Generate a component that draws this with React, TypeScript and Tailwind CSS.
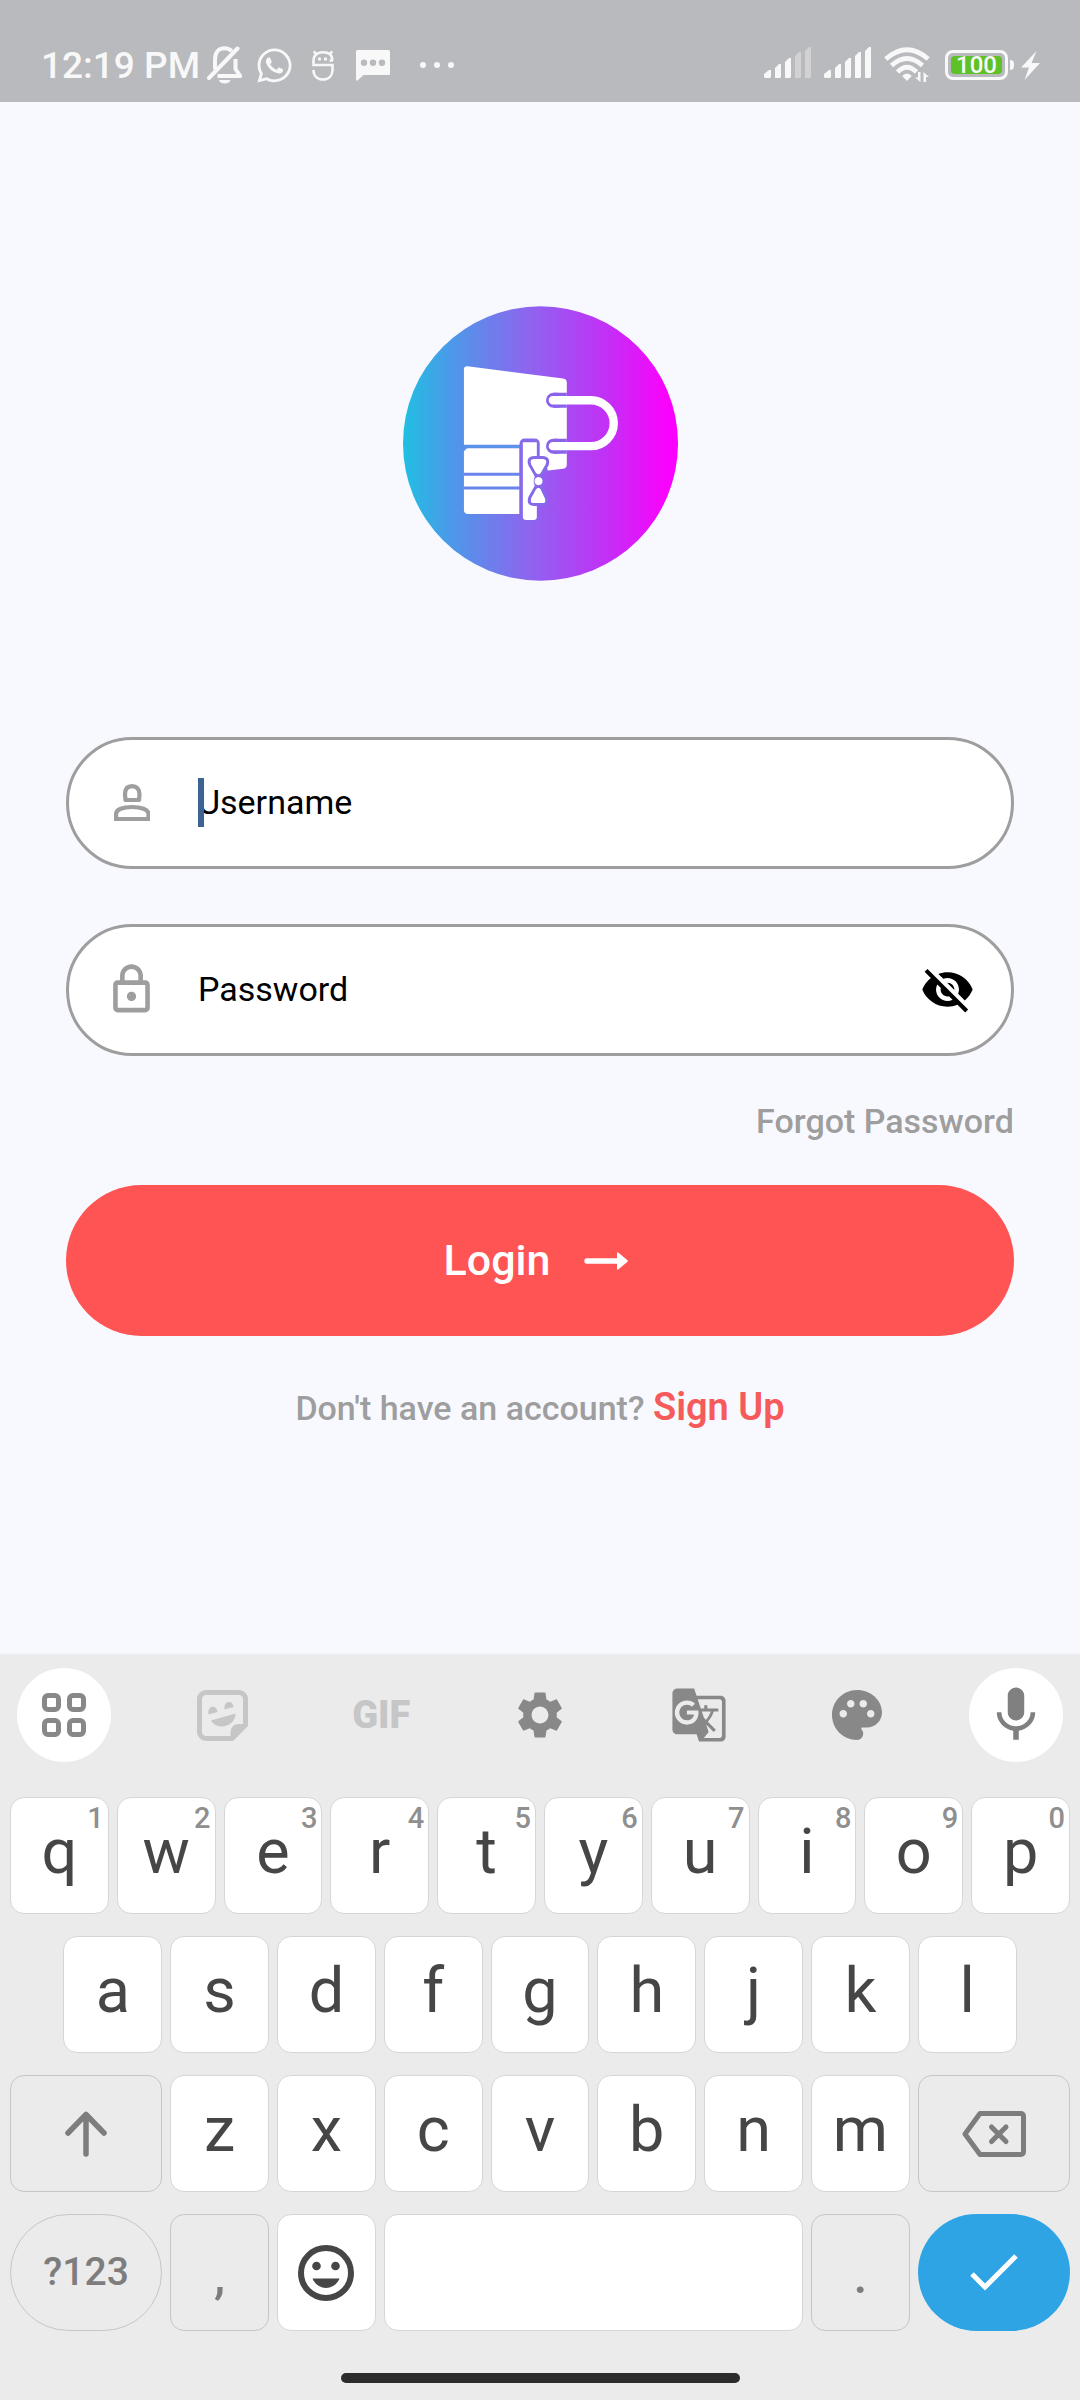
import { useState } from "react";
import type { ReactNode } from "react";
import { MdGTranslate, MdMic, MdOutlineLock, MdPalette, MdSettings, MdVisibilityOff } from "react-icons/md";
import { FaWhatsapp } from "react-icons/fa";

function BellOffIcon() {
  return (
    <svg viewBox="0 0 36 38" className="h-[38px] w-9" fill="none" stroke="currentColor" strokeWidth="4">
      <path d="M8 23.500V13.500C8 5.500 12.500 2.200 17.500 2.200c3 0 5.500 1 7.200 3" />
      <path d="M2 32 30.500 2.500" strokeLinecap="round" />
      <path d="M28.500 13v10l4.700 7H10.500" strokeLinejoin="round" />
      <path d="M12 34h11.500a5.800 4 0 0 1-11.500 0z" fill="currentColor" stroke="none" />
    </svg>
  );
}

function RobotIcon() {
  return (
    <svg viewBox="0 0 22 31" className="h-[31px] w-[22px]" fill="none" stroke="currentColor" strokeWidth="2.600">
      <path d="M21 10.500H17.500M20.500 10.500C20.500 5 17 2.200 11 2.200S1.500 5.500 1.500 11v4H20.500v5c0 5.500-3.500 9.500-9.500 9.500S1.500 25.500 1.500 20" />
      <path d="M4 4 1.800 1.300M18 4l2.200-2.700" />
      <circle cx="7.500" cy="9" r="1.700" fill="currentColor" stroke="none" />
      <circle cx="13.500" cy="9" r="1.700" fill="currentColor" stroke="none" />
    </svg>
  );
}

function MessageIcon() {
  return (
    <svg viewBox="0 0 34 31" className="h-[31px] w-[34px]" fill="currentColor">
      <path
        fillRule="evenodd"
        d="M1.500 0h31A1.500 1.500 0 0 1 34 1.500v22a1.500 1.500 0 0 1-1.500 1.500H7.500L1.500 30.500Q0 31 0 29.500v-28A1.500 1.500 0 0 1 1.500 0zM8 9.500a3.200 3.200 0 1 0 0 6.400a3.200 3.200 0 1 0 0-6.400zm9 0a3.200 3.200 0 1 0 0 6.400a3.200 3.200 0 1 0 0-6.400zm9 0a3.200 3.200 0 1 0 0 6.400a3.200 3.200 0 1 0 0-6.400z"
      />
    </svg>
  );
}

function SignalIcon({ strength }: { strength: number }) {
  const heights = [8, 14, 20, 26, 31];
  return (
    <svg viewBox="0 0 48 31" className="h-[31px] w-12" fill="currentColor">
      {heights.map((h, i) => (
        <path
          key={h}
          opacity={i < strength ? 1 : 0.4}
          d={`M${i * 10 + (i === 0 ? 0 : 1)} ${31 - h + 4}L${i * 10 + 5} ${31 - h}H${i * 10 + 7}V30L${i * 10 + 6} 31H${i * 10 + 1}L${i * 10 + (i === 0 ? 0 : 1)} 30z`}
        />
      ))}
    </svg>
  );
}

function WifiIcon() {
  return (
    <svg viewBox="0 0 46 36" className="h-9 w-[46px]" fill="none" stroke="currentColor" strokeWidth="4.800">
      <path d="M1.800 12Q23-6.500 44.200 12" />
      <path d="M7.500 18.500Q23 4.500 38.500 18.500" />
      <path d="M13.500 25Q23 15.500 32.500 25" />
      <path d="M23 26.500q3 0 4.800 2.500L23 34l-4.800-5Q20 26.500 23 26.500z" fill="currentColor" stroke="none" />
      <path d="M36.500 25v10L31 30.500h3V25zM39.500 35V25L45 30h-3v5z" fill="currentColor" stroke="none" />
    </svg>
  );
}

function StatusBar() {
  return (
    <header className="flex h-[102px] items-end justify-between bg-[#b9babe] pr-10 pb-[17px] pl-[41px] text-[#f8f8f8]">
      <div className="flex h-10 items-center">
        <span className="pt-0.5 text-[37px] leading-10 font-medium">12:19 PM</span>
        <div className="ml-[7px] flex items-center gap-3">
          <BellOffIcon />
          <FaWhatsapp className="size-[39px]" />
        </div>
        <div className="ml-[18px] flex items-center gap-[22px]">
          <RobotIcon />
          <MessageIcon />
        </div>
        <div className="ml-[30px] flex gap-2">
          <span className="size-1.5 rounded-full bg-current" />
          <span className="size-1.5 rounded-full bg-current" />
          <span className="size-1.5 rounded-full bg-current" />
        </div>
      </div>
      <div className="flex h-10 items-center">
        <div className="flex gap-3">
          <SignalIcon strength={3} />
          <SignalIcon strength={5} />
          <WifiIcon />
        </div>
        <div className="ml-[15px] flex h-[30px] w-[63px] items-center justify-center rounded-lg border-3 border-current p-[3px]">
          <span className="flex h-full w-full items-center justify-center rounded-sm bg-[#5ec127] text-[24px] leading-[18px] font-medium">
            100
          </span>
        </div>
        <span className="ml-0.5 h-2.5 w-1 rounded-r-sm bg-current" />
        <svg viewBox="0 0 19 29" className="ml-[7px] h-[29px] w-[19px]" fill="currentColor">
          <path d="M15.500 0 0 16.500h8L3.500 29 19 12h-8.500z" />
        </svg>
      </div>
    </header>
  );
}

function Logo() {
  return (
    <svg viewBox="36 48 826 824" className="size-[275px]" role="img" aria-label="Logo">
      <defs>
        <linearGradient id="logo-gradient" x1="0" x2="1" y1="0" y2="0">
          <stop offset="0" stopColor="#20bfe2" />
          <stop offset="0.180" stopColor="#4d98e9" />
          <stop offset="0.450" stopColor="#8c66ef" />
          <stop offset="0.750" stopColor="#c42ef6" />
          <stop offset="0.950" stopColor="#f804fc" />
          <stop offset="1" stopColor="#fb00ff" />
        </linearGradient>
      </defs>
      <ellipse cx="449" cy="460" rx="413" ry="412" fill="url(#logo-gradient)" />
      <path d="M230 228 517 265Q528 267 528 277V523Q528 534 517 536L440 545V464H219V238Q219 227 230 228z" fill="#fff" />
      <path d="M232 474H386V672H232Q219 672 219 659V487Q219 474 232 474z" fill="#fff" />
      <g fill="none" stroke="#866ae9" strokeWidth="9">
        <path d="M219 481Q219 469 231 469H388" stroke="#5b93e9" />
        <path d="M219 552.500H388M219 593.500H388" stroke="#6b83ec" />
      </g>
      <path d="M386 692V462Q386 445 403 445H430Q447 445 447 462V500H460L472 545H440V692z" fill="#866ae9" />
      <path d="M396 456H438V680Q438 690 428 690H406Q396 690 396 680z" fill="#fff" />
      <path d="M447 464H470V500H447z" fill="#fff" />
      <g fill="none" stroke="#8b62ec" strokeWidth="45">
        <path d="M488 330H500M488 468H500" strokeLinecap="round" />
        <path d="M488 330H528M488 468H528" />
      </g>
      <path d="M486 330H600A69 69 0 0 1 600 468H486" fill="none" stroke="#fff" strokeWidth="25" strokeLinecap="round" />
      <path d="M437 559 417 524Q409 503 430 502H455Q476 503 469 524L448 559Q456 573 448 587L465 622Q472 643 455 643H430Q410 643 417 622L437 587Q429 573 437 559z" fill="#fff" stroke="#866ae9" strokeWidth="9" />
      <g fill="#fff">
        <path d="M438 552 422 524Q417 508 431 508H454Q468 508 462 524L447 552z" />
        <circle cx="443" cy="573" r="12" />
        <path d="M438 594H447L462 625Q467 639 454 639H431Q417 639 422 625z" />
      </g>
      <path d="M432 552Q443 561 454 552M432 594Q443 585 454 594" fill="none" stroke="#866ae9" strokeWidth="8" />
    </svg>
  );
}

function PersonIcon() {
  return (
    <svg viewBox="0 0 36 37" className="h-[37px] w-9" fill="none" stroke="currentColor" strokeWidth="4.200">
      <path d="M11.500 16 11 10.500C11 5 13.500 2.200 18 2.200S25.500 5 25.500 10.500L25 16z" strokeLinejoin="round" />
      <path d="M2.100 35V30C2.100 25.500 9 23 18 23s16.500 2.500 16.500 7v5z" />
    </svg>
  );
}

function Field({
  id,
  label,
  type,
  icon,
  caret,
  action,
}: {
  id: string;
  label: string;
  type: string;
  icon: ReactNode;
  caret?: boolean;
  action?: ReactNode;
}) {
  return (
    <div className="flex h-[132px] items-center rounded-full border-3 border-[#9e9e9e] bg-white pr-9 pb-0.5 pl-[35px] text-[#9e9e9e]">
      <label htmlFor={id} aria-label={label} className="flex w-[55px] justify-center">
        {icon}
      </label>
      <div className="relative ml-[39px] flex flex-1">
        <input
          id={id}
          type={type}
          placeholder={label}
          className="h-[72px] w-full min-w-0 bg-transparent text-[34px] text-black outline-none placeholder:text-black placeholder:opacity-100"
        />
        {caret && <span className="absolute top-3 left-0 h-[49px] w-1.5 bg-[#3d6491]" />}
      </div>
      {action}
    </div>
  );
}

function LoginForm() {
  const [visible, setVisible] = useState(false);
  return (
    <form className="mt-[156px] w-full px-[66px]" onSubmit={(e) => e.preventDefault()}>
      <div className="flex flex-col gap-[55px]">
        <Field id="username" label="Username" type="text" icon={<PersonIcon />} caret />
        <Field
          id="password"
          label="Password"
          type={visible ? "text" : "password"}
          icon={<MdOutlineLock className="size-[55px]" />}
          action={
            <button type="button" aria-label="Show password" onClick={() => setVisible(!visible)} className="text-black">
              <MdVisibilityOff className="size-[55px]" />
            </button>
          }
        />
      </div>
      <div className="mt-[45px] flex justify-end">
        <a href="#forgot" className="text-[34px] leading-10 font-medium text-[#9e9e9e]">
          Forgot Password
        </a>
      </div>
      <button
        type="submit"
        className="mt-11 flex h-[151px] w-full items-center justify-center gap-[34px] rounded-full bg-[#ff5454] pr-2 text-[43px] font-medium text-white"
      >
        Login
        <svg viewBox="0 0 44 18" className="h-[18px] w-11" fill="currentColor">
          <path d="M3 6.300H33V1.500Q33-.500 34.800 1L43.200 8q1.200 1 0 2L34.800 17Q33 18.500 33 16.500V11.700H3a2.700 2.700 0 0 1 0-5.400z" />
        </svg>
      </button>
      <p className="mt-[51px] text-center text-[34px] leading-10 font-medium text-[#9e9e9e]">
        Don&apos;t have an account?{" "}
        <a href="#signup" className="text-[38px] font-semibold text-[#f65b5b]">
          Sign Up
        </a>
      </p>
    </form>
  );
}

function StickerIcon() {
  return (
    <svg viewBox="0 0 51 51" className="size-[51px]" fill="none">
      <path d="M9 2.500H42A6.500 6.500 0 0 1 48.500 9V35L35 48.500H9A6.500 6.500 0 0 1 2.500 42V9A6.500 6.500 0 0 1 9 2.500z" stroke="currentColor" strokeWidth="5" />
      <g fill="currentColor">
        <path d="M33.500 50V43Q33.500 34 42 34H50z" />
        <path d="M11.500 24.500C10 14.500 20 15 20.500 22z" />
        <path d="M27.500 19.500C26.500 10 36 10 36.500 17z" />
        <path d="M14 30.500 38.500 23.500C38.500 37 20 41 14 30.500z" />
      </g>
    </svg>
  );
}

function GridIcon() {
  return (
    <span className="grid grid-cols-2 gap-1.5">
      <span className="size-[19px] rounded-md border-[5px] border-current" />
      <span className="size-[19px] rounded-md border-[5px] border-current" />
      <span className="size-[19px] rounded-md border-[5px] border-current" />
      <span className="size-[19px] rounded-md border-[5px] border-current" />
    </span>
  );
}

function Toolbar() {
  const tool = "flex size-[94px] items-center justify-center rounded-full";
  return (
    <div className="flex justify-between px-[17px] text-[#888888]">
      <button aria-label="More tools" className={`${tool} bg-white`}>
        <GridIcon />
      </button>
      <button aria-label="Stickers" className={`${tool} text-[#c6c6c6]`}>
        <StickerIcon />
      </button>
      <button className={`${tool} text-[38px] font-black text-[#c6c6c6]`}>GIF</button>
      <button aria-label="Settings" className={tool}>
        <MdSettings className="size-14" />
      </button>
      <button aria-label="Translate" className={tool}>
        <MdGTranslate className="size-[58px]" />
      </button>
      <button aria-label="Themes" className={tool}>
        <MdPalette className="size-[60px]" />
      </button>
      <button aria-label="Voice input" className={`${tool} bg-white text-[#808080]`}>
        <MdMic className="size-[66px]" />
      </button>
    </div>
  );
}

function LetterKey({ char, hint, first }: { char: string; hint?: string; first?: boolean }) {
  return (
    <button
      className={`relative flex h-[117px] items-center justify-center rounded-[14px] border border-[#d6d6d6] bg-white pb-2 text-[63px] leading-none text-[#464646] ${first ? "col-span-2 col-start-2" : "col-span-2"}`}
    >
      {char}
      {hint && (
        <span className="absolute top-1 right-1 text-[29px] leading-8 font-medium text-[#8f8f8f]">{hint}</span>
      )}
    </button>
  );
}

function Keyboard() {
  const fn = "flex h-[117px] items-center justify-center border border-[#c6c6c6] text-[#7d7d7d]";
  return (
    <section
      aria-label="Keyboard"
      className="bg-[#ebebeb] pt-[13px] pb-[17px] shadow-[0_-1px_3px_rgba(0,0,0,0.06)]"
    >
      <Toolbar />
      <div className="mt-[35px] grid grid-cols-[repeat(20,minmax(0,1fr))] gap-x-2 gap-y-[22px] px-2.5">
        {[..."qwertyuiop"].map((c, i) => (
          <LetterKey key={c} char={c} hint={String((i + 1) % 10)} />
        ))}
        {[..."asdfghjkl"].map((c, i) => (
          <LetterKey key={c} char={c} first={i === 0} />
        ))}
        <button aria-label="Shift" className={`${fn} col-span-3 col-start-1 rounded-[14px]`}>
          <svg viewBox="0 0 42 46" className="h-[46px] w-[42px]" fill="none" stroke="currentColor" strokeWidth="5.500" strokeLinecap="round" strokeLinejoin="round">
            <path d="M21 43V3.500M3 22 21 3.500 39 22" />
          </svg>
        </button>
        {[..."zxcvbnm"].map((c) => (
          <LetterKey key={c} char={c} />
        ))}
        <button aria-label="Backspace" className={`${fn} col-span-3 rounded-[14px]`}>
          <svg viewBox="0 0 64 46" className="h-[46px] w-16" fill="none" stroke="currentColor" strokeWidth="5" strokeLinejoin="round">
            <path d="M18 2.500H59a2.500 2.500 0 0 1 2.500 2.500V41a2.500 2.500 0 0 1-2.500 2.500H18L3 23z" />
            <path d="M29.500 16 44 30.500M44 16 29.500 30.500" strokeLinecap="round" />
          </svg>
        </button>
        <button className={`${fn} col-span-3 rounded-full text-[39px] font-medium`}>?123</button>
        <button className={`${fn} col-span-2 rounded-[14px] pt-2 text-[50px] font-medium`}>,</button>
        <button
          aria-label="Emoji"
          className="col-span-2 flex h-[117px] items-center justify-center rounded-[14px] border border-[#d6d6d6] bg-white text-[#464646]"
        >
          <svg viewBox="0 0 56 56" className="size-14" fill="currentColor">
            <circle cx="28" cy="28" r="25" fill="none" stroke="currentColor" strokeWidth="6" />
            <circle cx="18.500" cy="21" r="4.300" />
            <circle cx="37.500" cy="21" r="4.300" />
            <path d="M14.500 33.500H41.500C36.500 46 19.500 46 14.500 33.500z" />
          </svg>
        </button>
        <button
          aria-label="Space"
          className="col-span-8 h-[117px] rounded-[14px] border border-[#d6d6d6] bg-white"
        />
        <button className={`${fn} col-span-2 rounded-[14px] pt-2 text-[50px] font-medium`}>.</button>
        <button
          aria-label="Done"
          className="col-span-3 flex h-[117px] items-center justify-center rounded-full bg-[#2fa4e5] text-white"
        >
          <svg viewBox="0 0 48 37" className="h-[37px] w-12" fill="none" stroke="currentColor" strokeWidth="5">
            <path d="M2 20 15 33 46 2" />
          </svg>
        </button>
      </div>
      <div className="mt-[42px] flex justify-center">
        <span className="h-2.5 w-[399px] rounded-full bg-[#2c2c2c]" />
      </div>
    </section>
  );
}

export default function App() {
  return (
    <div className="flex min-h-screen flex-col bg-[#f8f9ff] font-['Roboto',sans-serif]">
      <StatusBar />
      <main className="flex flex-1 flex-col items-center pt-[204px] pb-10">
        <Logo />
        <LoginForm />
      </main>
      <Keyboard />
    </div>
  );
}
